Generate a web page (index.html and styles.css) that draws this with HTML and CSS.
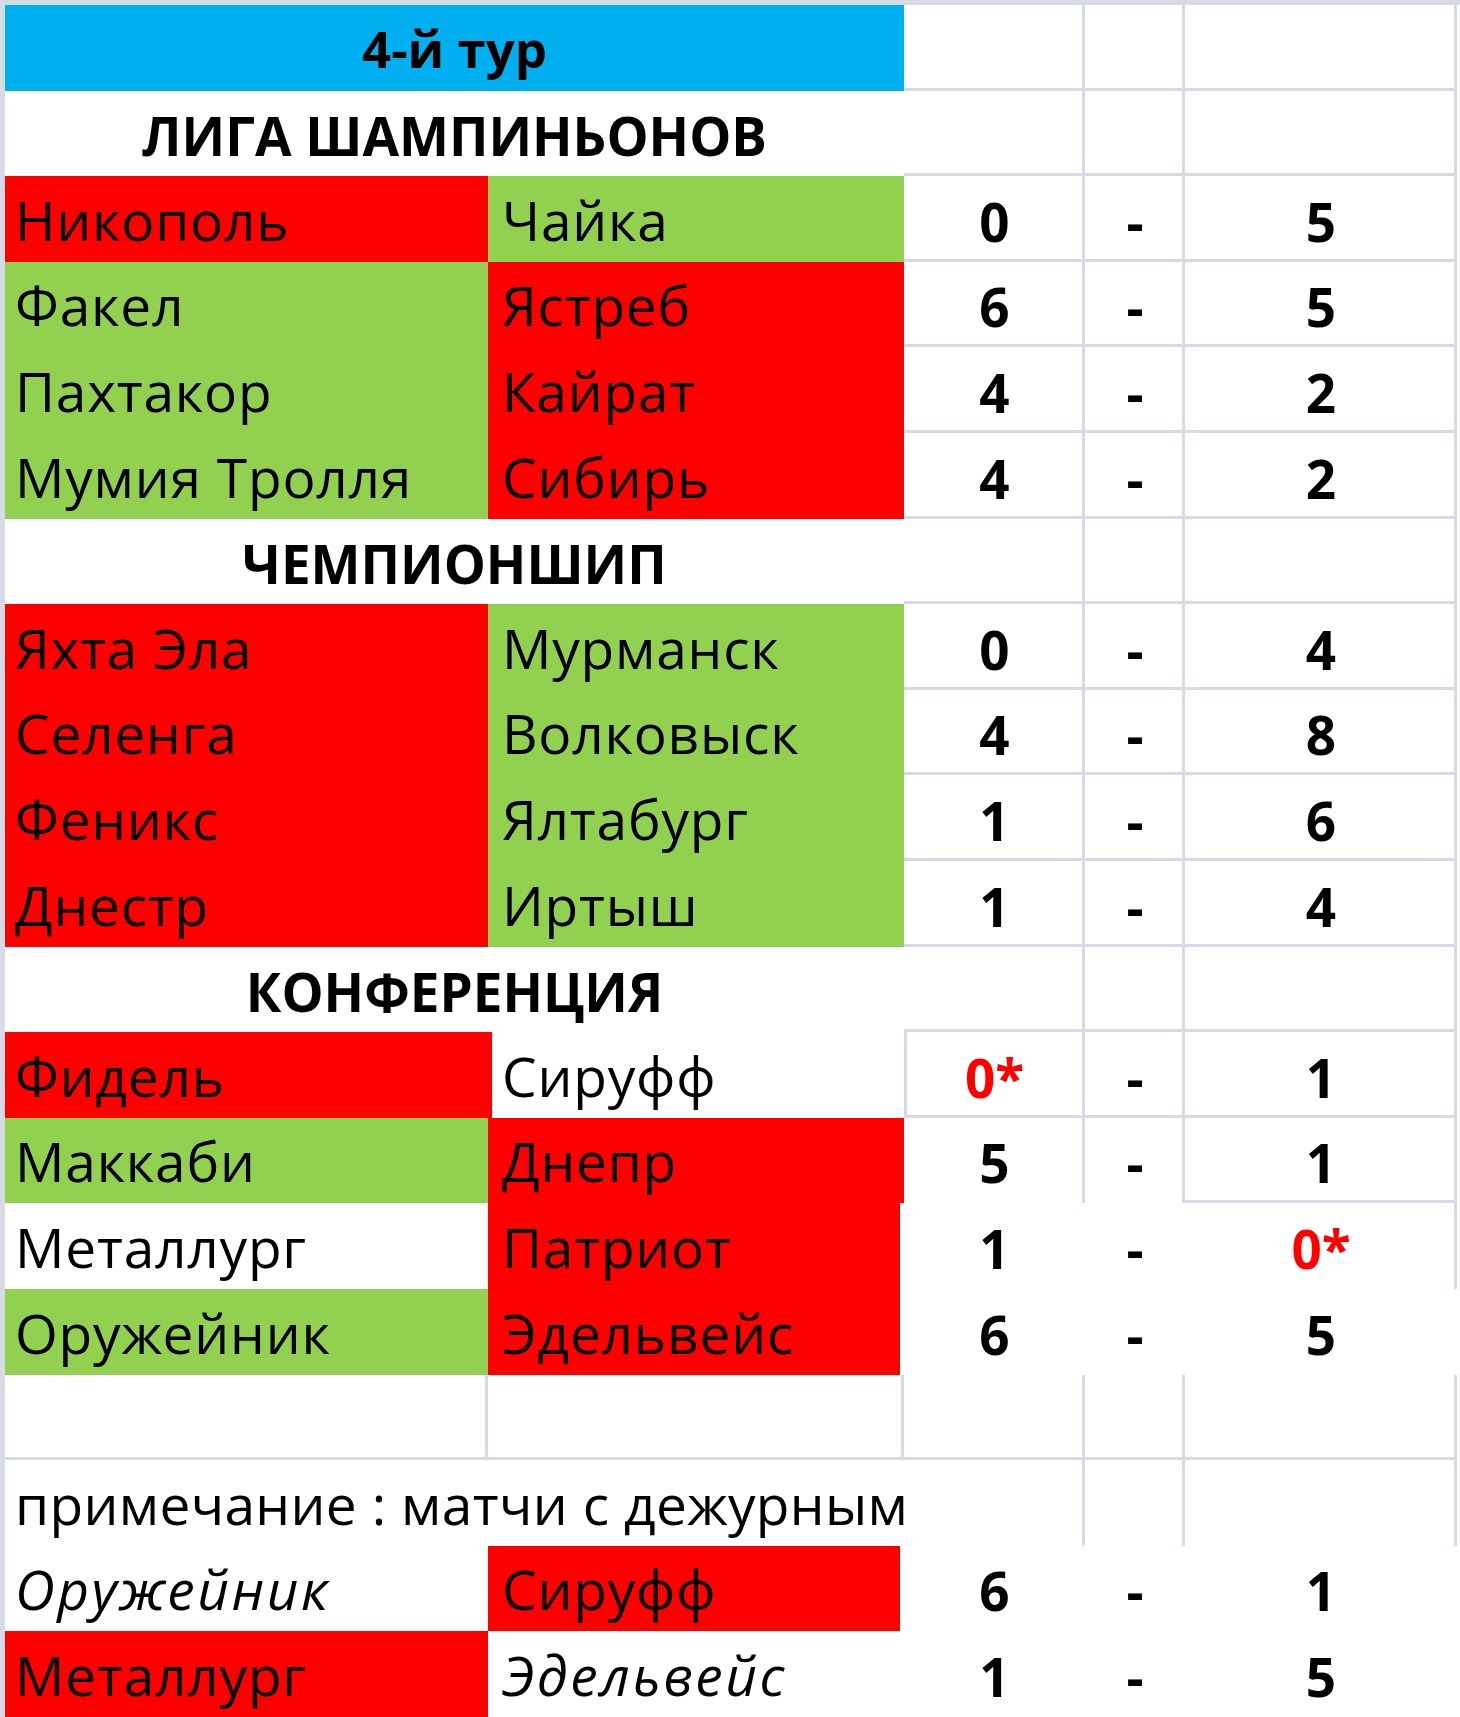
FILE: index.html
```html
<!DOCTYPE html>
<html lang="ru">
<head>
<meta charset="utf-8">
<title>4-й тур</title>
<link rel="stylesheet" href="styles.css">
</head>
<body>
<div class="frame">
  <div class="sheet">
    <!-- row 1 -->
    <div class="c hdr title blue">4-й тур</div>
    <div class="c ln-rb"></div><div class="c ln-rb"></div><div class="c ln-rb"></div>
    <!-- row 2 -->
    <div class="c hdr white">ЛИГА ШАМПИНЬОНОВ</div>
    <div class="c ln-rb"></div><div class="c ln-rb"></div><div class="c ln-rb"></div>
    <!-- rows 3-6 -->
    <div class="c na red">Никополь</div><div class="c nb green">Чайка</div>
    <div class="c num ln-rb">0</div><div class="c num ln-rb">-</div><div class="c num ln-rb">5</div>
    <div class="c na green">Факел</div><div class="c nb red">Ястреб</div>
    <div class="c num ln-rb">6</div><div class="c num ln-rb">-</div><div class="c num ln-rb">5</div>
    <div class="c na green">Пахтакор</div><div class="c nb red">Кайрат</div>
    <div class="c num ln-rb">4</div><div class="c num ln-rb">-</div><div class="c num ln-rb">2</div>
    <div class="c na green">Мумия Тролля</div><div class="c nb red">Сибирь</div>
    <div class="c num ln-rb">4</div><div class="c num ln-rb">-</div><div class="c num ln-rb">2</div>
    <!-- row 7 -->
    <div class="c hdr white">ЧЕМПИОНШИП</div>
    <div class="c ln-rb"></div><div class="c ln-rb"></div><div class="c ln-rb"></div>
    <!-- rows 8-11 -->
    <div class="c na red">Яхта Эла</div><div class="c nb green">Мурманск</div>
    <div class="c num ln-rb">0</div><div class="c num ln-rb">-</div><div class="c num ln-rb">4</div>
    <div class="c na red">Селенга</div><div class="c nb green">Волковыск</div>
    <div class="c num ln-rb">4</div><div class="c num ln-rb">-</div><div class="c num ln-rb">8</div>
    <div class="c na red">Феникс</div><div class="c nb green">Ялтабург</div>
    <div class="c num ln-rb">1</div><div class="c num ln-rb">-</div><div class="c num ln-rb">6</div>
    <div class="c na red">Днестр</div><div class="c nb green">Иртыш</div>
    <div class="c num ln-rb">1</div><div class="c num ln-rb">-</div><div class="c num ln-rb">4</div>
    <!-- row 12 -->
    <div class="c hdr white">КОНФЕРЕНЦИЯ</div>
    <div class="c ln-rb"></div><div class="c ln-rb"></div><div class="c ln-rb"></div>
    <!-- rows 13-16 -->
    <div class="c na red wide">Фидель</div><div class="c nb white">Сируфф</div>
    <div class="c num ln-lrb tech">0*</div><div class="c num ln-rb">-</div><div class="c num ln-rb">1</div>
    <div class="c na green">Маккаби</div><div class="c nb red">Днепр</div>
    <div class="c num ln-r">5</div><div class="c num ln-r">-</div><div class="c num ln-rb">1</div>
    <div class="c na white">Металлург</div><div class="c nb red short">Патриот</div>
    <div class="c num">1</div><div class="c num">-</div><div class="c num ln-r tech">0*</div>
    <div class="c na green">Оружейник</div><div class="c nb red short">Эдельвейс</div>
    <div class="c num">6</div><div class="c num">-</div><div class="c num">5</div>
    <!-- row 17 -->
    <div class="c ln-rb"></div><div class="c ln-rb"></div>
    <div class="c ln-rb"></div><div class="c ln-rb"></div><div class="c ln-rb"></div>
    <!-- row 18 -->
    <div class="c na note">примечание : матчи с дежурным</div>
    <div class="c ln-r"></div><div class="c ln-r"></div><div class="c ln-r"></div>
    <!-- rows 19-20 -->
    <div class="c na white it">Оружейник</div><div class="c nb red short">Сируфф</div>
    <div class="c num">6</div><div class="c num">-</div><div class="c num">1</div>
    <div class="c na red">Металлург</div><div class="c nb white it">Эдельвейс</div>
    <div class="c num">1</div><div class="c num">-</div><div class="c num">5</div>
  </div>
</div>
</body>
</html>
```

FILE: styles.css
```css
html, body {
  margin: 0;
  padding: 0;
  background: #ffffff;
}

body {
  font-family: "Open Sans", "Noto Sans", "DejaVu Sans", sans-serif;
  color: #000000;
}

.frame {
  width: 1455px;
  height: 1712px;
  border-top: 5px solid #d7dbe6;
  border-left: 5px solid #d7dbe6;
  overflow: hidden;
}

.sheet {
  display: grid;
  grid-template-columns: 483px 416px 181px 100px 272px;
  grid-auto-rows: 85.6px;
  width: 1452px;
}

.c {
  display: flex;
  align-items: flex-end;
  box-sizing: border-box;
  padding-bottom: 15px;
  font-size: 55px;
  line-height: 1;
  white-space: nowrap;
  min-width: 0;
}

.na, .nb { letter-spacing: 0.8px; }
.na { padding-left: 10px; }
.nb { padding-left: 14px; }

.hdr {
  grid-column: span 2;
  justify-content: center;
  font-weight: 700;
  font-size: 53px;
  padding-bottom: 14px;
}

.title {
  font-size: 51px;
  padding-bottom: 17px;
}

.num {
  justify-content: center;
  font-weight: 700;
  font-size: 53px;
  padding-bottom: 14px;
}

.tech { color: #ff0000; }

.it {
  font-style: italic;
  letter-spacing: 2.5px;
}

.note {
  grid-column: span 2;
  overflow: visible;
  position: relative;
  z-index: 1;
  letter-spacing: 0.35px;
}

.red { background: #ff0000; }
.green { background: #92d050; }
.blue { background: #00b0f0; }
.white { background: #ffffff; }

.wide { margin-right: -4px; position: relative; z-index: 1; }
.short { margin-right: 4px; }

.ln-r { box-shadow: inset -3px 0 0 #d4dae7; }
.ln-rb { box-shadow: inset -3px -3px 0 #d4dae7; }
.ln-lrb { box-shadow: inset -3px -3px 0 #d4dae7, inset 3px 0 0 #d4dae7; }
```
